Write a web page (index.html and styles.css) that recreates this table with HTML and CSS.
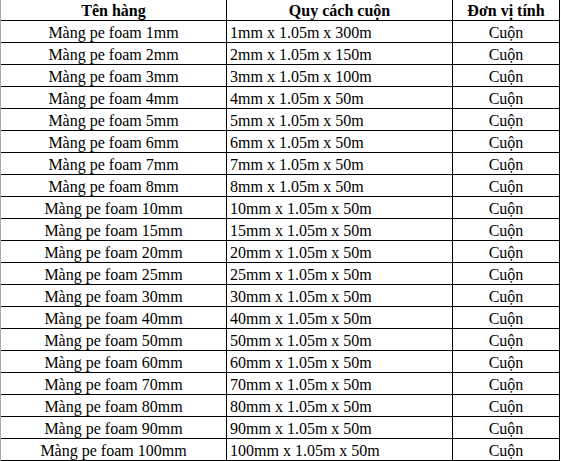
FILE: index.html
```html
<!DOCTYPE html>
<html lang="vi">
<head>
<meta charset="utf-8">
<title>Màng pe foam</title>
<link rel="stylesheet" href="styles.css">
</head>
<body>
<table class="spec">
<colgroup><col class="c1"><col class="c2"><col class="c3"></colgroup>
<thead>
<tr><th>Tên hàng</th><th>Quy cách cuộn</th><th>Đơn vị tính</th></tr>
</thead>
<tbody>
<tr><td>Màng pe foam 1mm</td><td class="l">1mm x 1.05m x 300m</td><td>Cuộn</td></tr>
<tr><td>Màng pe foam 2mm</td><td class="l">2mm x 1.05m x 150m</td><td>Cuộn</td></tr>
<tr><td>Màng pe foam 3mm</td><td class="l">3mm x 1.05m x 100m</td><td>Cuộn</td></tr>
<tr><td>Màng pe foam 4mm</td><td class="l">4mm x 1.05m x 50m</td><td>Cuộn</td></tr>
<tr><td>Màng pe foam 5mm</td><td class="l">5mm x 1.05m x 50m</td><td>Cuộn</td></tr>
<tr><td>Màng pe foam 6mm</td><td class="l">6mm x 1.05m x 50m</td><td>Cuộn</td></tr>
<tr><td>Màng pe foam 7mm</td><td class="l">7mm x 1.05m x 50m</td><td>Cuộn</td></tr>
<tr><td>Màng pe foam 8mm</td><td class="l">8mm x 1.05m x 50m</td><td>Cuộn</td></tr>
<tr><td>Màng pe foam 10mm</td><td class="l">10mm x 1.05m x 50m</td><td>Cuộn</td></tr>
<tr><td>Màng pe foam 15mm</td><td class="l">15mm x 1.05m x 50m</td><td>Cuộn</td></tr>
<tr><td>Màng pe foam 20mm</td><td class="l">20mm x 1.05m x 50m</td><td>Cuộn</td></tr>
<tr><td>Màng pe foam 25mm</td><td class="l">25mm x 1.05m x 50m</td><td>Cuộn</td></tr>
<tr><td>Màng pe foam 30mm</td><td class="l">30mm x 1.05m x 50m</td><td>Cuộn</td></tr>
<tr><td>Màng pe foam 40mm</td><td class="l">40mm x 1.05m x 50m</td><td>Cuộn</td></tr>
<tr><td>Màng pe foam 50mm</td><td class="l">50mm x 1.05m x 50m</td><td>Cuộn</td></tr>
<tr><td>Màng pe foam 60mm</td><td class="l">60mm x 1.05m x 50m</td><td>Cuộn</td></tr>
<tr><td>Màng pe foam 70mm</td><td class="l">70mm x 1.05m x 50m</td><td>Cuộn</td></tr>
<tr><td>Màng pe foam 80mm</td><td class="l">80mm x 1.05m x 50m</td><td>Cuộn</td></tr>
<tr><td>Màng pe foam 90mm</td><td class="l">90mm x 1.05m x 50m</td><td>Cuộn</td></tr>
<tr><td>Màng pe foam 100mm</td><td class="l">100mm x 1.05m x 50m</td><td>Cuộn</td></tr>
</tbody>
</table>
</body>
</html>
```
FILE: styles.css
```css
html, body {
  margin: 0;
  padding: 0;
  background: #fff;
}
.spec {
  border-collapse: separate;
  border-spacing: 0;
  table-layout: fixed;
  width: 560px;
  border-left: 1px solid #a6a6a6;
  font-family: "Liberation Serif", "Times New Roman", serif;
  font-size: 16px;
  color: #000;
}
.c1 { width: 226px; }
.c2 { width: 226px; }
.c3 { width: 107px; }
.spec th, .spec td {
  box-sizing: border-box;
  padding: 2px 0 0 0;
  border-right: 1px solid #000;
  border-bottom: 1px solid #000;
  text-align: center;
  white-space: nowrap;
  overflow: hidden;
  line-height: 19px;
}
.spec th {
  font-weight: bold;
  padding-top: 1px;
  line-height: 19px;
}
.spec td.l {
  text-align: left;
  padding-left: 3px;
}
```
